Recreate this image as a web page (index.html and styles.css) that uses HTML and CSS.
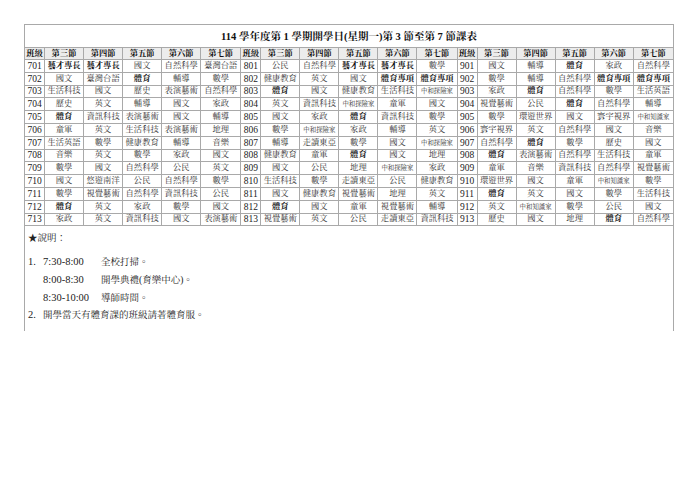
FILE: index.html
```html
<!DOCTYPE html>
<html lang="zh-Hant">
<head>
<meta charset="utf-8">
<title>課表</title>
<link rel="stylesheet" href="styles.css">
</head>
<body>
<div class="frame">
  <div class="title">114 學年度第 1 學期開學日(星期一)第 3 節至第 7 節課表</div>
  <table class="grid">
    <colgroup>
      <col class="c-cls"><col class="c-sub"><col class="c-sub"><col class="c-sub"><col class="c-sub"><col class="c-sub2">
      <col class="c-cls"><col class="c-sub"><col class="c-sub"><col class="c-sub"><col class="c-sub"><col class="c-sub2">
      <col class="c-cls"><col class="c-sub"><col class="c-sub"><col class="c-sub"><col class="c-sub"><col class="c-sub2">
    </colgroup>
    <thead>
      <tr class="head">
        <th>班級</th><th>第三節</th><th>第四節</th><th>第五節</th><th>第六節</th><th>第七節</th>
        <th>班級</th><th>第三節</th><th>第四節</th><th>第五節</th><th>第六節</th><th>第七節</th>
        <th>班級</th><th>第三節</th><th>第四節</th><th>第五節</th><th>第六節</th><th>第七節</th>
      </tr>
    </thead>
    <tbody id="rows"></tbody>
  </table>
  <div class="notes">
    <div class="note-title">★說明：</div>
    <div class="note-line first"><span class="num">1.</span><span class="time">7:30-8:00</span><span class="desc">全校打掃。</span></div>
    <div class="note-line"><span class="num"></span><span class="time">8:00-8:30</span><span class="desc">開學典禮(育樂中心)。</span></div>
    <div class="note-line"><span class="num"></span><span class="time">8:30-10:00</span><span class="desc">導師時間。</span></div>
    <div class="note-line"><span class="num">2.</span><span class="desc2">開學當天有體育課的班級請著體育服。</span></div>
  </div>
</div>
<script src="app.js"></script>
</body>
</html>
```

FILE: app.js
```js
const data = [
  ["701","藝才專長","藝才專長","國文","自然科學","臺灣台語","801","公民","自然科學","藝才專長","藝才專長","數學","901","國文","輔導","體育","家政","自然科學"],
  ["702","國文","臺灣台語","體育","輔導","數學","802","健康教育","英文","國文","體育專項","體育專項","902","數學","輔導","自然科學","體育專項","體育專項"],
  ["703","生活科技","國文","歷史","表演藝術","自然科學","803","體育","國文","健康教育","生活科技","中和探險家","903","家政","體育","自然科學","數學","生活英語"],
  ["704","歷史","英文","輔導","國文","家政","804","英文","資訊科技","中和探險家","童軍","國文","904","視覺藝術","公民","體育","自然科學","輔導"],
  ["705","體育","資訊科技","表演藝術","國文","輔導","805","國文","家政","體育","資訊科技","數學","905","數學","環遊世界","國文","寰宇視界","中和知識家"],
  ["706","童軍","英文","生活科技","表演藝術","地理","806","數學","中和探險家","家政","輔導","英文","906","寰宇視界","英文","自然科學","國文","音樂"],
  ["707","生活英語","數學","健康教育","輔導","音樂","807","輔導","走讀東亞","數學","國文","中和探險家","907","自然科學","體育","數學","歷史","國文"],
  ["708","音樂","英文","數學","家政","國文","808","健康教育","童軍","體育","國文","地理","908","體育","表演藝術","自然科學","生活科技","童軍"],
  ["709","數學","國文","自然科學","公民","英文","809","國文","公民","地理","中和探險家","家政","909","童軍","音樂","資訊科技","自然科學","視覺藝術"],
  ["710","國文","悠遊南洋","公民","自然科學","數學","810","生活科技","數學","走讀東亞","公民","健康教育","910","環遊世界","國文","童軍","中和知識家","數學"],
  ["711","數學","視覺藝術","自然科學","資訊科技","公民","811","國文","健康教育","視覺藝術","地理","英文","911","體育","英文","國文","數學","生活科技"],
  ["712","體育","英文","家政","數學","國文","812","體育","國文","童軍","視覺藝術","輔導","912","英文","中和知識家","數學","公民","國文"],
  ["713","家政","英文","資訊科技","國文","表演藝術","813","視覺藝術","英文","公民","走讀東亞","資訊科技","913","歷史","國文","地理","體育","自然科學"]
];
const bold = new Set(["體育","藝才專長","體育專項"]);
const tbody = document.getElementById("rows");
data.forEach(row => {
  const tr = document.createElement("tr");
  row.forEach((v, i) => {
    const td = document.createElement("td");
    td.textContent = v;
    if (i % 6 === 0) td.className = "cls";
    else if (bold.has(v)) td.className = "b";
    else if (v.length >= 5) td.className = "sm";
    tr.appendChild(td);
  });
  tbody.appendChild(tr);
});
```

FILE: styles.css
```css
html, body {
  margin: 0;
  padding: 0;
  background: #fff;
}
body {
  font-family: "Liberation Serif", "Noto Serif CJK TC", "Noto Sans CJK TC", serif;
  color: #222;
}
.frame {
  margin: 24px 0 0 24px;
  width: 648px;
  height: 306px;
  border: 1px solid #a9a9a9;
  border-bottom: none;
}
.title {
  height: 22px;
  line-height: 24px;
  text-align: center;
  font-size: 10.5px;
  font-weight: bold;
  color: #111;
}
.grid {
  border-collapse: collapse;
  table-layout: fixed;
  width: 650px;
  margin: 0 -1px;
}
.c-cls { width: 20px; }
.c-sub { width: 39px; }
.c-sub2 { width: 40px; }
.grid th, .grid td {
  border: 1px solid #a9a9a9;
  padding: 0;
  text-align: center;
  white-space: nowrap;
  overflow: hidden;
  font-size: 8.3px;
  line-height: 10px;
}
.grid tr.head th {
  height: 11px;
  background: #ececec;
  font-weight: bold;
  color: #111;
}
.grid tbody td {
  height: 11.8px;
  color: #333;
}
.grid td.cls {
  font-size: 9.5px;
  font-family: "Liberation Serif", serif;
  color: #222;
}
.grid td.b {
  font-weight: bold;
  color: #111;
}
.grid td.sm {
  font-size: 6.4px;
}
.notes {
  padding: 3px 0 0 3px;
  font-size: 9.5px;
  color: #222;
}
.note-title {
  height: 18px;
  line-height: 18px;
}
.note-line {
  display: flex;
  align-items: center;
  height: 17.7px;
  line-height: 18px;
}
.note-line.first {
  margin-top: 6px;
}
.num {
  width: 15px;
  font-size: 10.5px;
}
.time {
  width: 58px;
  font-size: 10.5px;
}
.desc, .desc2 {
  font-size: 9.5px;
}
```
